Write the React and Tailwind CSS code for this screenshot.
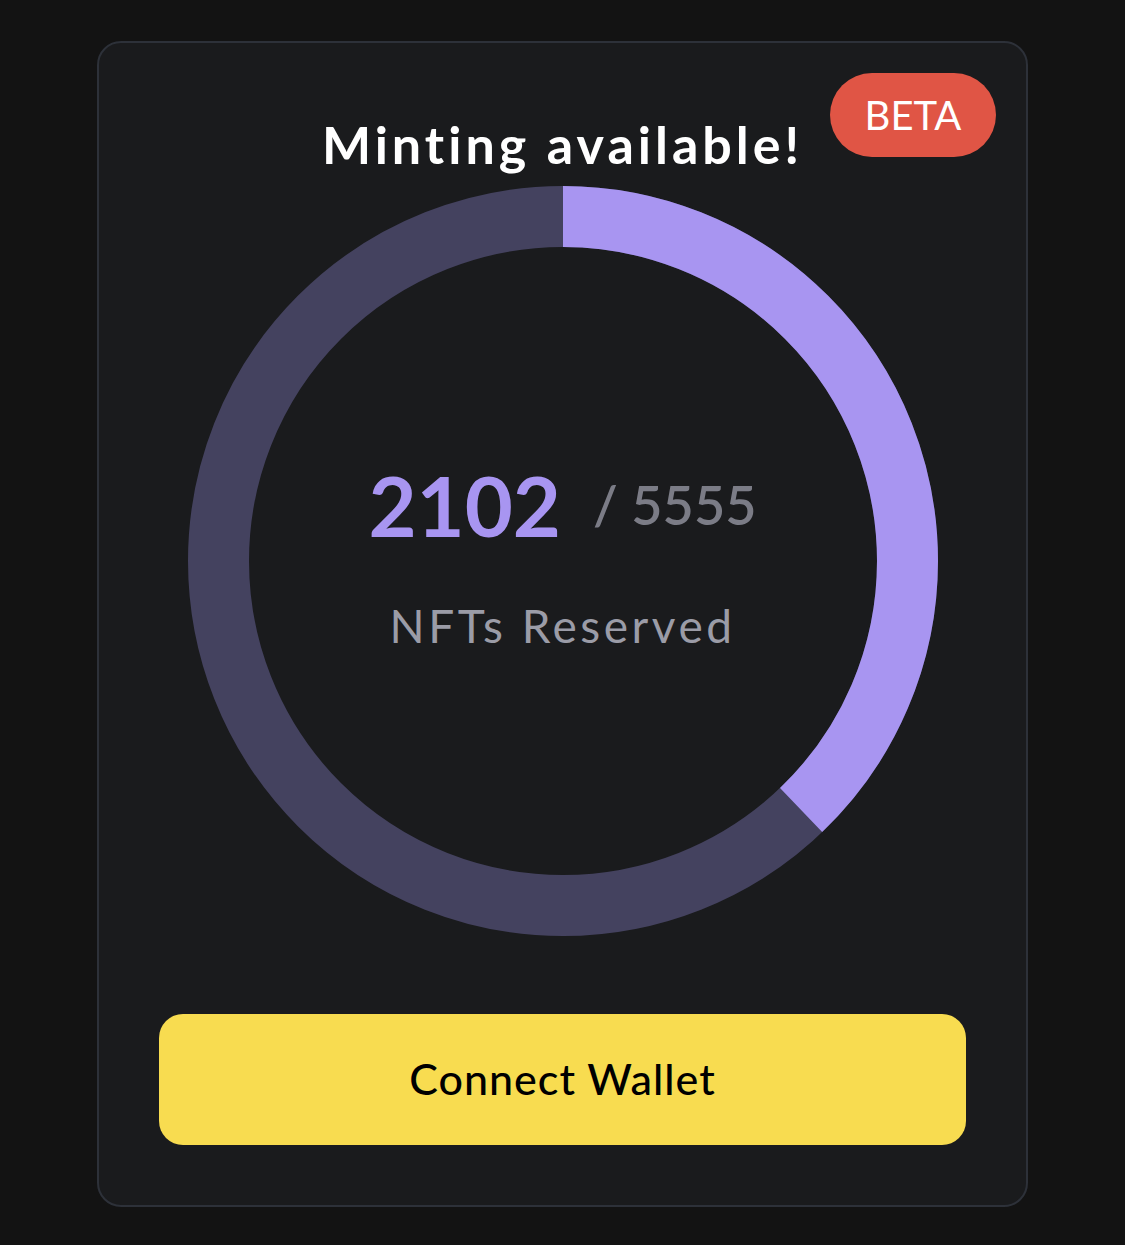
import React from "react";

const TOTAL = 5555;
const RESERVED = 2102;

function ProgressRing({ value, total }) {
  const size = 750;
  const stroke = 61;
  const r = (size - stroke) / 2;
  const c = 2 * Math.PI * r;
  const filled = (value / total) * c;

  return (
    <svg width={size} height={size} viewBox={`0 0 ${size} ${size}`} className="block">
      <circle cx={size / 2} cy={size / 2} r={r} fill="none" stroke="#44425f" strokeWidth={stroke} />
      <circle
        cx={size / 2}
        cy={size / 2}
        r={r}
        fill="none"
        stroke="#a895f1"
        strokeWidth={stroke}
        strokeDasharray={`${filled} ${c}`}
        transform={`rotate(-90 ${size / 2} ${size / 2})`}
      />
    </svg>
  );
}

export default function App() {
  return (
    <div className="min-h-screen w-full bg-[#131313] pt-[41px] pb-[37px] font-['Lato',_sans-serif]">
      <div className="relative mx-auto flex w-[931px] flex-col items-center rounded-[24px] border-2 border-[#2d3139] bg-[#1a1b1d] pt-[53px] pb-[60px]">
        {/* beta badge */}
        <div className="absolute top-[30px] right-[30px] flex h-[84px] w-[166px] items-center justify-center rounded-full bg-[#e05545] text-[40px] leading-none text-white">
          BETA
        </div>

        <div className="flex h-[90px] items-center pt-[6px]">
          <h1 className="text-[52px] font-bold leading-normal tracking-[4px] text-white">Minting available!</h1>
        </div>

        <div className="relative">
          <ProgressRing value={RESERVED} total={TOTAL} />
          <div className="absolute inset-0 flex flex-col items-center justify-center pb-[10px]">
            <div className="flex items-center">
              <span className="text-[83px] font-bold leading-none text-[#a895f1]">{RESERVED}</span>
              <span className="ml-[32px] text-[54px] font-semibold leading-none text-[#7b7c86]">/ {TOTAL}</span>
            </div>
            <div className="mt-[56px] text-[46px] font-normal leading-none tracking-[3.5px] text-[#9b9ca7]">NFTs Reserved</div>
          </div>
        </div>

        <button className="mt-[78px] flex h-[131px] w-[807px] items-center justify-center rounded-[24px] bg-[#f8dc50] text-[43px] font-medium tracking-[1px] text-black">
          Connect Wallet
        </button>
      </div>
    </div>
  );
}
